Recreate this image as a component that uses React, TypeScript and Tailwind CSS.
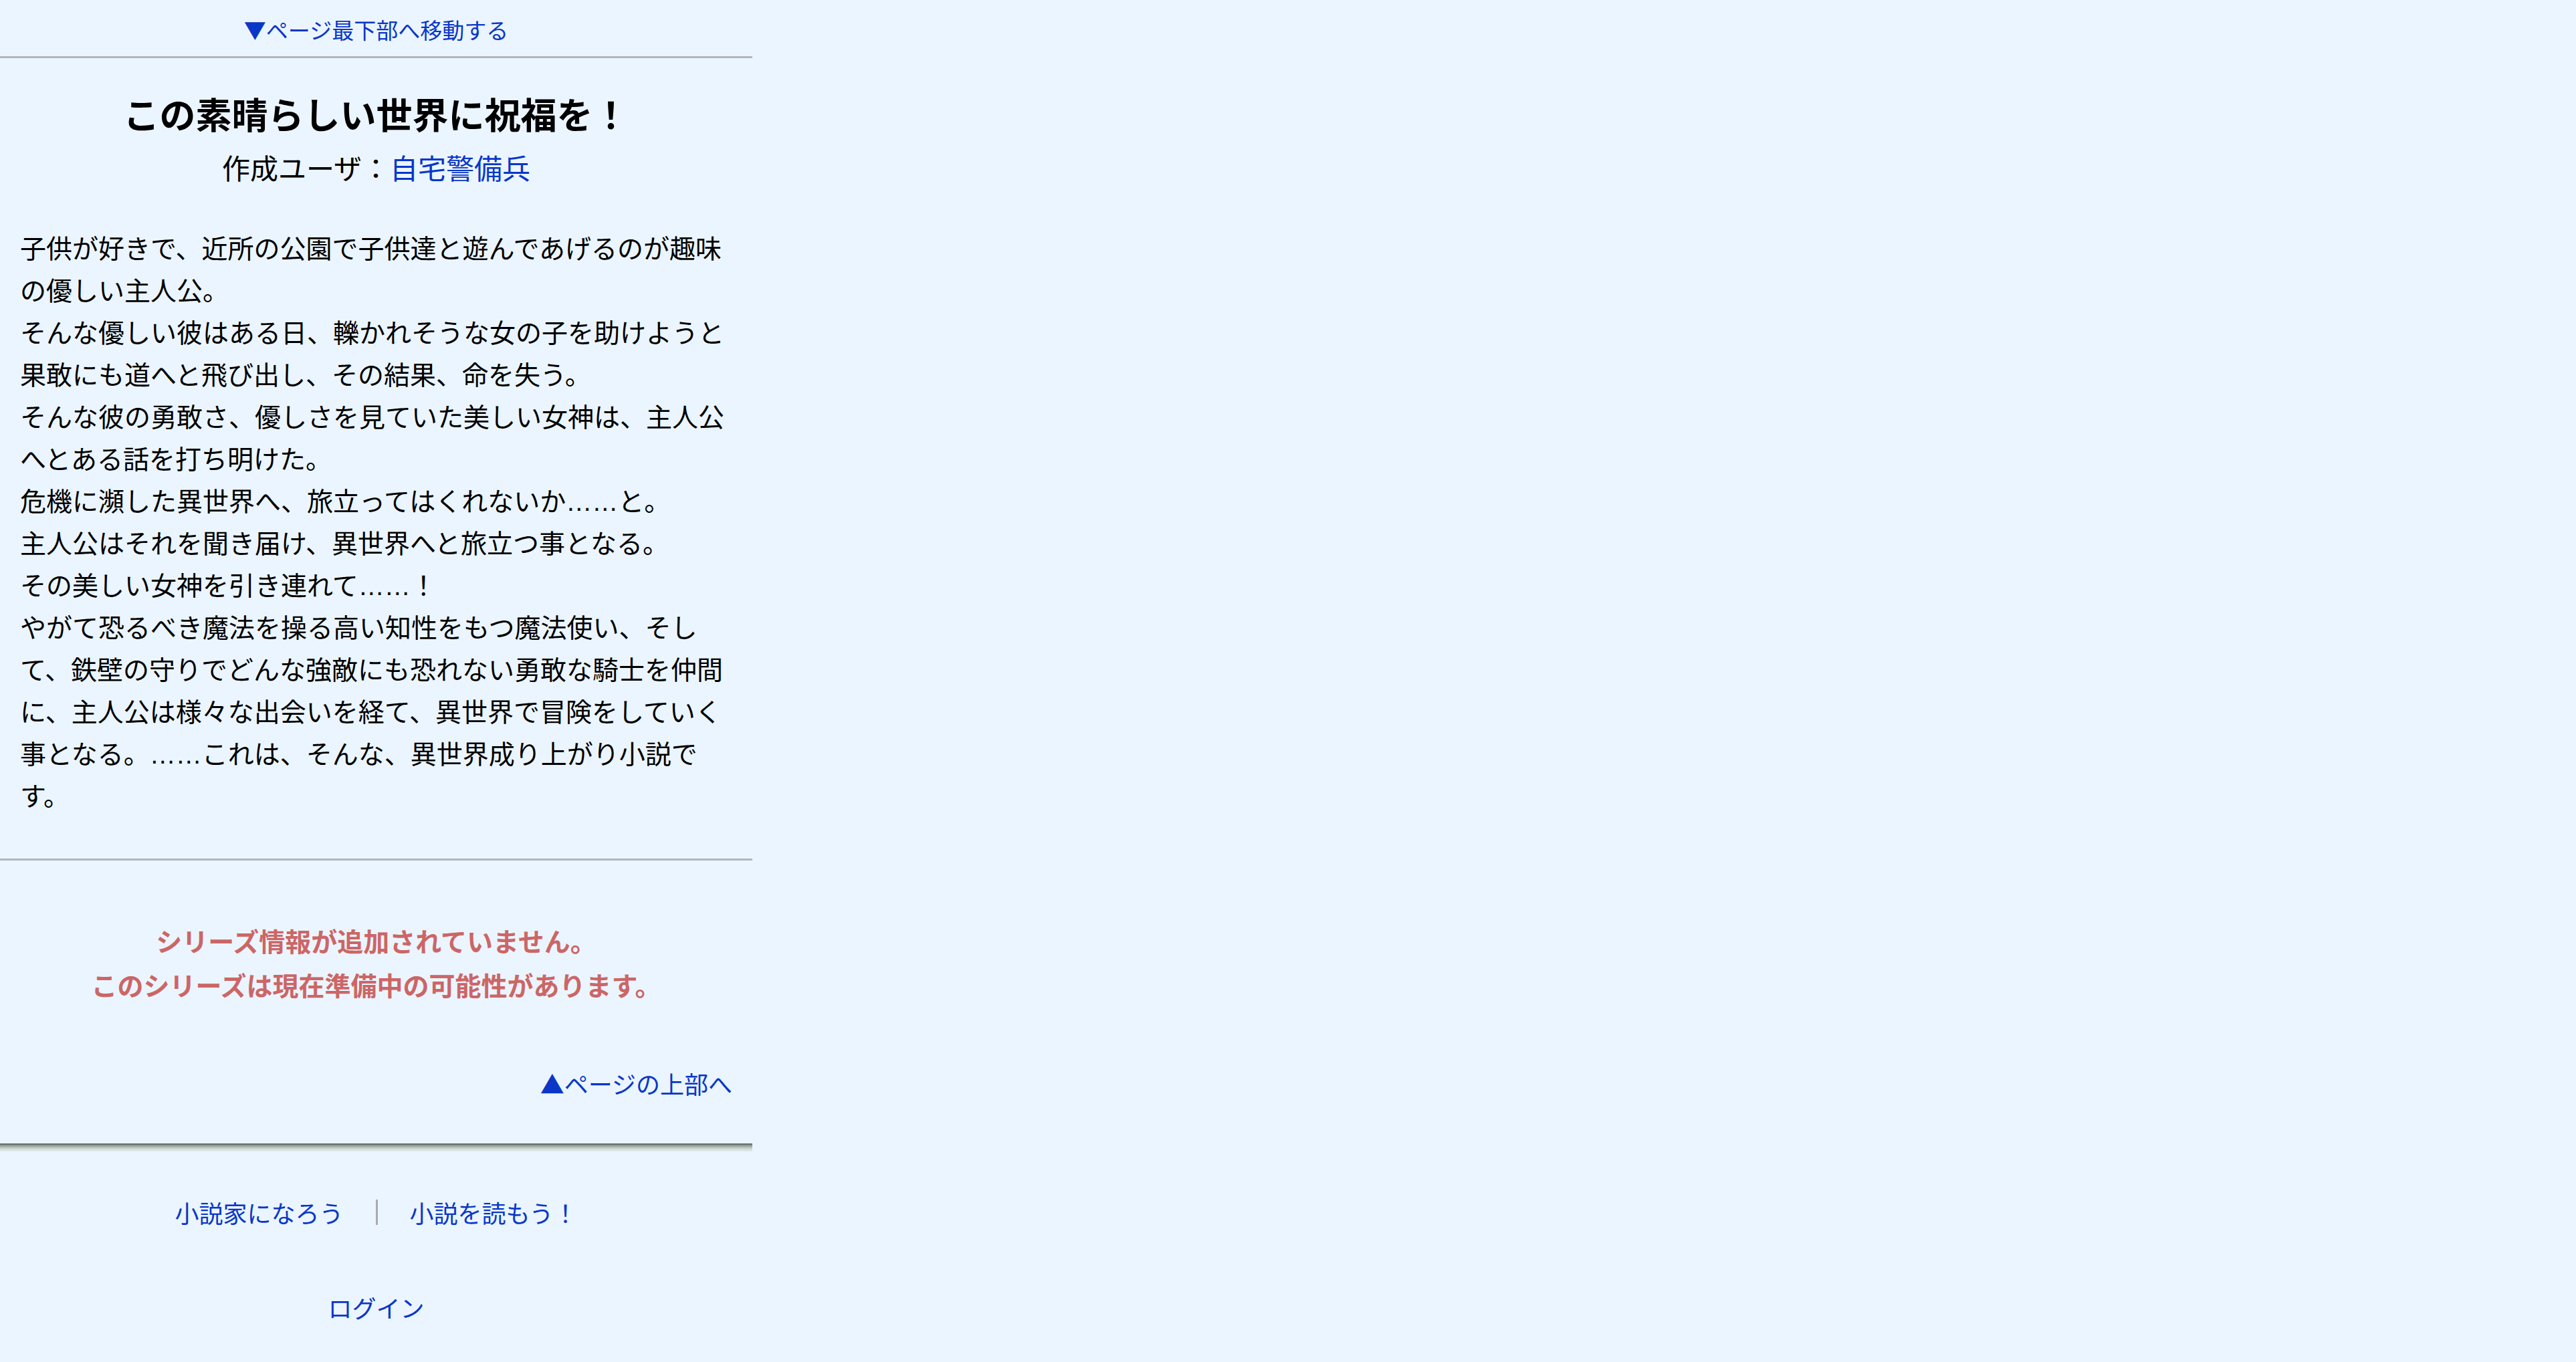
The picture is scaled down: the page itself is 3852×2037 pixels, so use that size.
const FONT = '"Noto Sans CJK JP", "Noto Sans", sans-serif';

// ellipsis dots sit on the baseline in the reference
const Dots = () => (
  <span className="leading-none" style={{ fontFamily: '"Liberation Sans", sans-serif' }}>
    ……
  </span>
);

export default function App() {
  return (
    <div className="min-h-screen w-full bg-[#ebf5ff]" style={{ fontFamily: FONT }}>
      <div className="w-[1125px]">
        {/* top nav */}
        <div className="h-[84px] flex items-center justify-center pt-[4px]">
          <a href="#bottom" className="text-[33px] leading-none text-[#0a37c8]">
            ▼ページ最下部へ移動する
          </a>
        </div>
        <div className="h-[3px] bg-[#b3b5b8]" />

        {/* header */}
        <div className="pt-[43px] text-center">
          <h1 className="text-[54px] leading-[80px] font-bold text-black">この素晴らしい世界に祝福を！</h1>
          <p className="mt-[8px] text-[42px] leading-[63px] text-black">
            作成ユーザ：<a href="#" className="text-[#0a37c8]">自宅警備兵</a>
          </p>
        </div>

        {/* synopsis */}
        <div className="px-[30px] pt-[57px] pb-[64px] text-[39px] leading-[63px] text-black">
          <p>子供が好きで、近所の公園で子供達と遊んであげるのが趣味の優しい主人公。</p>
          <p>そんな優しい彼はある日、轢かれそうな女の子を助けようと果敢にも道へと飛び出し、その結果、命を失う。</p>
          <p>そんな彼の勇敢さ、優しさを見ていた美しい女神は、主人公へとある話を打ち明けた。</p>
          <p>危機に瀕した異世界へ、旅立ってはくれないか<Dots />と。</p>
          <p>主人公はそれを聞き届け、異世界へと旅立つ事となる。</p>
          <p>その美しい女神を引き連れて<Dots />！</p>
          <p>
            やがて恐るべき魔法を操る高い知性をもつ魔法使い、そして、鉄壁の守りでどんな強敵にも恐れない勇敢な騎士を仲間に、主人公は様々な出会いを経て、異世界で冒険をしていく事となる。<Dots />これは、そんな、異世界成り上がり小説です。
          </p>
        </div>
        <div className="h-[3px] bg-[#b3b5b8]" />

        {/* series info */}
        <div className="pt-[86px] text-center text-[39px] leading-[66px] font-bold text-[#cc6666]">
          <p>シリーズ情報が追加されていません。</p>
          <p>このシリーズは現在準備中の可能性があります。</p>
        </div>

        <div className="pt-[88px] px-[30px] flex justify-end">
          <a href="#top" className="text-[36px] leading-[54px] text-[#0a37c8]">
            ▲ページの上部へ
          </a>
        </div>

        {/* footer */}
        <div className="mt-[63px]">
          <div className="h-[3px] bg-[#6e7c79]" />
          <div className="h-[3px] bg-[#a2aca9]" />
          <div className="h-[3px] bg-[#c9d1ce]" />
          <div className="h-[3px] bg-[#dde5e6]" />
        </div>
        <div className="pt-[64px] flex items-center justify-center text-[36px] leading-[54px] text-[#0a37c8]">
          <a href="#">小説家になろう</a>
          <span className="mx-[48px] w-[3px] h-[38px] bg-[#a9acb0]" />
          <a href="#">小説を読もう！</a>
        </div>
        <div className="pt-[88px] pb-[60px] flex justify-center text-[36px] leading-[54px] text-[#0a37c8]">
          <a href="#">ログイン</a>
        </div>
      </div>
    </div>
  );
}
